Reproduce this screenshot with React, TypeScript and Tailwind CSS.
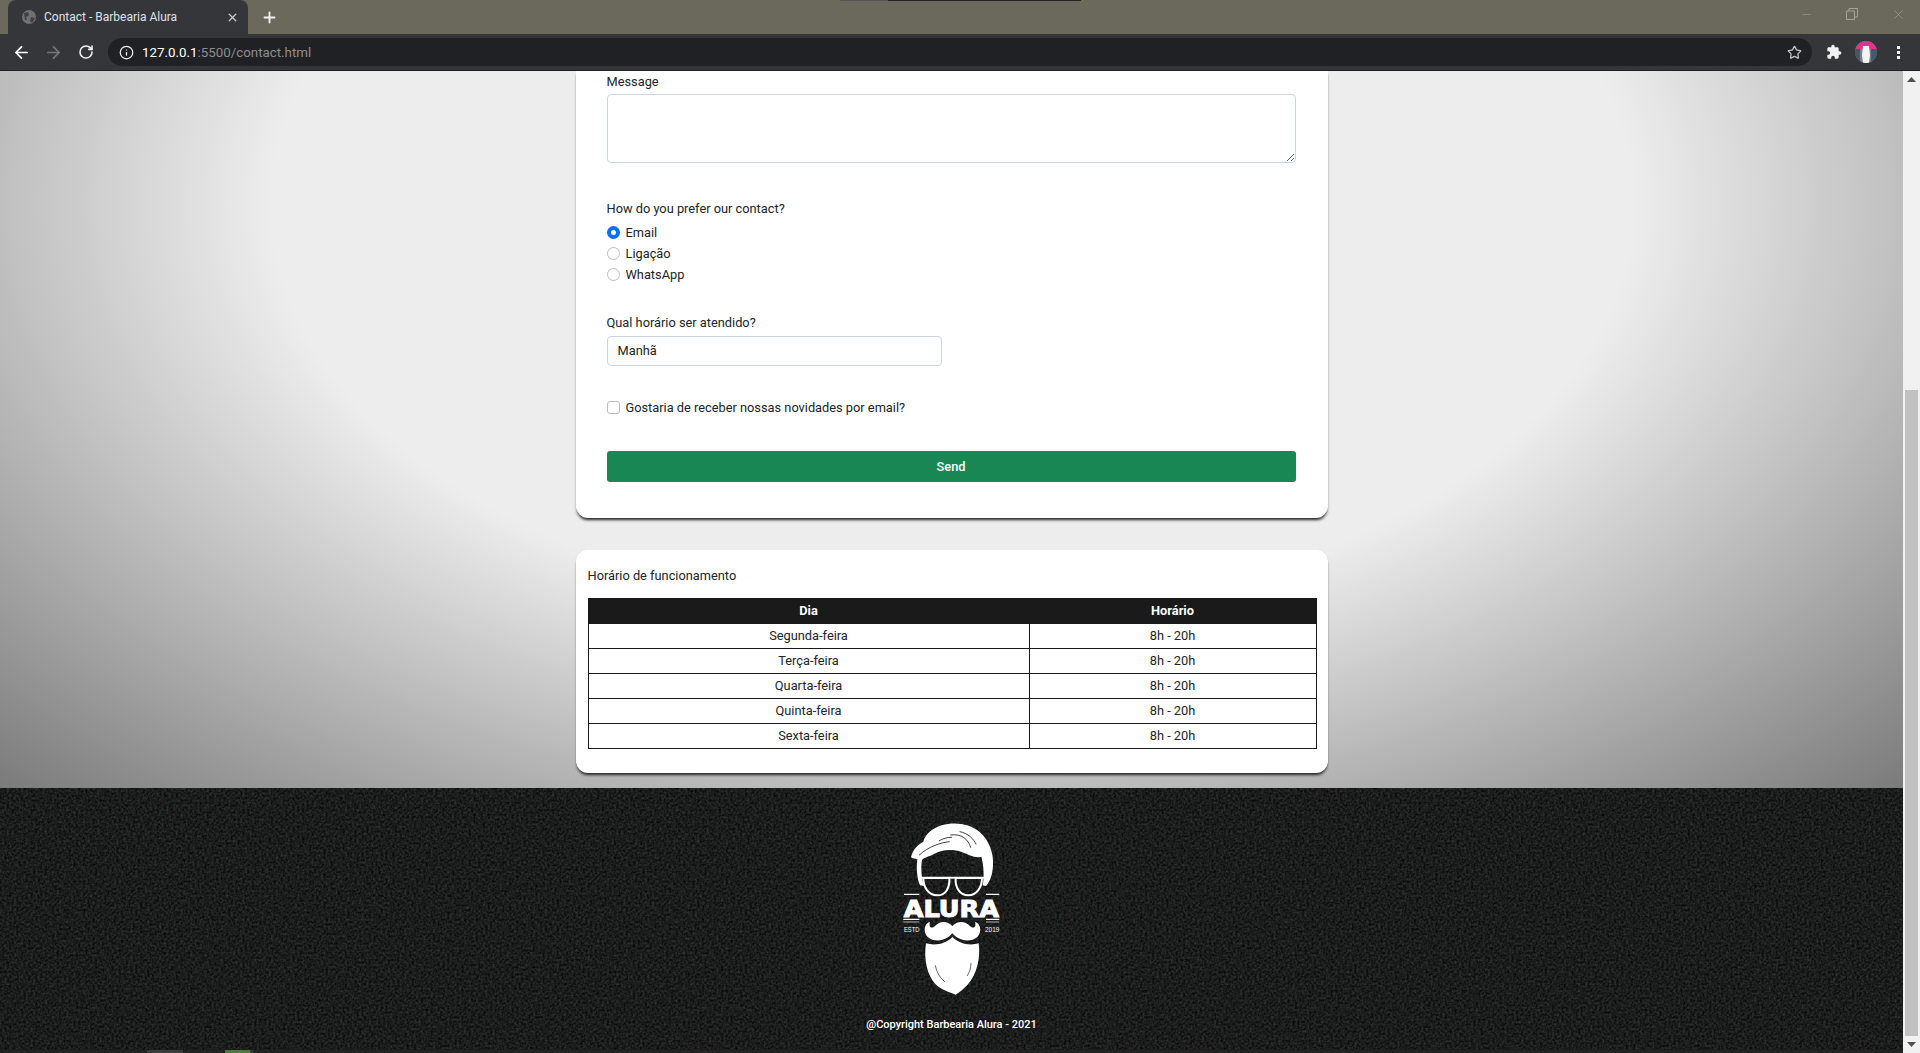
import React from "react";
import { ArrowLeft, ArrowRight, RotateCw, Info, Star, Plus, X, Minus } from "lucide-react";

const rows = ["Segunda-feira", "Terça-feira", "Quarta-feira", "Quinta-feira", "Sexta-feira"];

function Logo() {
  return (
    <svg viewBox="120 60 310 530" width="103.33" height="176.67" className="block">
      <path fill="#fff" d="M153 172 C158 150 172 135 190 125 C195 105 215 85 245 76 C285 64 330 72 358 95 C385 118 402 155 399 198 C397 225 390 245 378 258 L368 256 C373 235 372 200 364 170 C345 176 330 165 305 156 C275 146 245 150 222 162 C207 170 193 172 186 180 C182 200 184 235 192 258 L180 256 C172 238 168 205 172 178 C165 176 158 175 153 172 Z" />
      <path fill="none" stroke="#1b1b1b" strokeWidth="2.5" strokeLinecap="round" d="M178 165 C205 140 240 128 268 125 M272 105 C305 100 325 118 332 142 M300 95 C325 100 342 118 348 132 M238 122 C250 115 262 112 275 112" />
      <path fill="none" stroke="#fff" strokeWidth="6" strokeLinejoin="round" d="M190 234 H268 C270 262 258 286 232 286 C205 286 190 262 190 234 Z M287 234 H366 C366 262 350 286 325 286 C299 286 285 262 287 234 Z" />
      <path stroke="#fff" strokeWidth="6" d="M182 233 H374" />
      <path stroke="#fff" strokeWidth="4" d="M132 283 H178 M378 283 H418 M130 358 H178 M378 358 H418" />
      <path stroke="#fff" strokeWidth="2" d="M130 366 H178 M378 366 H418" />
      <text x="131" y="351" fill="#fff" stroke="#fff" strokeWidth="3" fontFamily="'DejaVu Sans', sans-serif" fontWeight="700" fontSize="68" textLength="286" lengthAdjust="spacingAndGlyphs">ALURA</text>
      <text x="132" y="397" fill="#fff" fontFamily="'Liberation Sans', sans-serif" fontSize="22" textLength="46" lengthAdjust="spacingAndGlyphs">ESTD</text>
      <text x="375" y="397" fill="#fff" fontFamily="'Liberation Sans', sans-serif" fontSize="22" textLength="43" lengthAdjust="spacingAndGlyphs">2019</text>
      <path fill="#fff" d="M277 378 C262 362 240 362 225 378 C215 388 205 382 210 365 C193 370 188 395 203 411 C225 430 260 422 277 400 C295 422 330 430 352 411 C367 395 362 370 345 365 C350 382 340 388 330 378 C315 362 292 362 277 378 Z" />
      <path fill="#fff" d="M198 430 C225 438 257 432 277 411 C298 432 330 438 356 430 C362 470 352 525 322 555 C308 570 296 578 287 584 C270 576 245 572 226 552 C203 528 190 480 198 430 Z" />
      <path fill="none" stroke="#1b1b1b" strokeWidth="2" strokeLinecap="round" d="M226 497 C230 518 240 534 254 545 M333 490 C333 505 328 518 322 527" />
    </svg>
  );
}

function FooterNoise() {
  return (
    <svg className="absolute inset-0 w-full h-full" aria-hidden="true">
      <filter id="fn" x="0" y="0" width="100%" height="100%" colorInterpolationFilters="sRGB">
        <feTurbulence type="fractalNoise" baseFrequency="0.42" numOctaves="2" seed="4" />
        <feColorMatrix type="matrix" values="0.24 0 0 0 -0.012  0.24 0 0 0 -0.01  0.24 0 0 0 -0.01  0 0 0 0 1" />
      </filter>
      <rect width="100%" height="100%" filter="url(#fn)" />
    </svg>
  );
}

export default function App() {
  return (
    <div className="relative w-[1920px] h-[1053px] overflow-hidden flex flex-col font-['Roboto',sans-serif] text-[12.8px] leading-[21px] text-[#212529]">
      {/* tab strip */}
      <div className="h-[34px] shrink-0 bg-[#6b685c] flex items-end pl-2 relative">
        <div className="absolute left-[840px] top-0 h-px w-[48px] bg-[#555]" />
        <div className="absolute left-[888px] top-0 h-px w-[193px] bg-[#222]" />
        <div className="w-[240px] h-[34px] bg-[#35363a] rounded-t-[8px] flex items-center pl-[13px] pr-[9px] text-[12px] text-[#dee1e6]">
          <svg width="16" height="16" viewBox="0 0 16 16" className="shrink-0"><circle cx="8" cy="8" r="7" fill="#6e7074" /><path fill="#3f4044" d="M3 4 L7 3 L8 6 L5 8 L6 11 L4 11 Z M10 8 L14 9 L11 14 L9 12 Z" /></svg>
          <span className="ml-[7px] flex-1 whitespace-nowrap">Contact - Barbearia Alura</span>
          <X size={13} strokeWidth={2.4} className="text-[#c8c9cb]" />
        </div>
        <Plus size={17} strokeWidth={2.6} className="text-[#f1f1f1] ml-[13px] mb-[8px]" />
        <div className="ml-auto flex items-center h-full text-[#a5a297] pr-[14px] pb-[6px]">
          <Minus size={13} strokeWidth={1} className="mr-[33px]" />
          <svg width="12" height="12" viewBox="0 0 12 12" fill="none" stroke="currentColor" className="mr-[33px]"><path d="M.5 3 H8.5 V11.5 H.5 Z M3 3 V.5 H11.5 V9 H8.5" /></svg>
          <X size={15} strokeWidth={1} />
        </div>
      </div>
      {/* toolbar */}
      <div className="h-[37px] shrink-0 bg-[#35363a] border-b border-[#202124] flex items-center pl-[12px]">
        <ArrowLeft size={19} strokeWidth={2.2} className="text-white" />
        <ArrowRight size={19} strokeWidth={2.2} className="text-[#77787b] ml-[13px]" />
        <RotateCw size={16} strokeWidth={2.4} className="text-[#f1f1f1] ml-[15px]" />
        <div className="ml-[14px] w-[1704px] h-[28px] rounded-[14px] bg-[#202124] flex items-center pl-[11px] pr-[10px]">
          <Info size={15} strokeWidth={2} className="text-[#f1f1f1]" />
          <span className="ml-[8px] text-[13.33px] text-white">127.0.0.1<span className="text-[#8d8e90]">:5500/contact.html</span></span>
          <Star size={15} strokeWidth={2} className="ml-auto text-[#c4c5c6]" />
        </div>
        <svg viewBox="0 0 24 24" width="16" height="16" fill="#f1f1f1" className="ml-[14px]"><path d="M20.5 11H19V7c0-1.1-.9-2-2-2h-4V3.5C13 2.12 11.88 1 10.5 1S8 2.12 8 3.5V5H4c-1.1 0-1.99.9-1.99 2v3.8H3.5c1.49 0 2.7 1.21 2.7 2.7s-1.21 2.7-2.7 2.7H2V20c0 1.1.9 2 2 2h3.8v-1.5c0-1.49 1.21-2.7 2.7-2.7 1.49 0 2.7 1.21 2.7 2.7V22H17c1.1 0 2-.9 2-2v-4h1.5c1.38 0 2.5-1.12 2.5-2.5S21.88 11 20.5 11z" /></svg>
        <svg viewBox="0 0 22 22" width="22" height="22" className="ml-[13px]">
          <clipPath id="av"><circle cx="11" cy="11" r="11" /></clipPath>
          <g clipPath="url(#av)">
            <rect width="22" height="22" fill="#77808c" />
            <rect width="22" height="8" fill="#e0358c" />
            <rect x="0" y="8" width="5" height="14" fill="#4c5560" />
            <rect x="16" y="8" width="6" height="14" fill="#46586c" />
            <path fill="#f4f4f4" d="M8 5 H14 L15 14 L14 22 H8 L7 14 Z" />
          </g>
        </svg>
        <div className="ml-[20px] flex flex-col gap-[2px]">
          <span className="w-[3px] h-[3px] bg-white" /><span className="w-[3px] h-[3px] bg-white" /><span className="w-[3px] h-[3px] bg-white" />
        </div>
      </div>
      {/* page + scrollbar */}
      <div className="flex flex-1 min-h-0">
        <div className="w-[1903px] flex flex-col">
          <main className="h-[717px] shrink-0 flex flex-col items-center bg-[radial-gradient(ellipse_1360px_822px_at_952px_133px,#ededed_50%,#7a7a7a_100%)]">
            <form className="w-[752px] h-[447px] shrink-0 bg-white rounded-b-[12px] shadow-[0_3px_3px_-1px_#222] px-[31px]">
              <div>Message</div>
              <textarea className="block w-[689px] h-[69px] mt-[2px] border border-[#ced4da] rounded-[4px] bg-white" />
              <div className="mt-[35px]">How do you prefer our contact?</div>
              <div className="mt-[3px] flex flex-col">
                <label className="flex items-center h-[21px]"><input type="radio" name="c" readOnly className="appearance-none w-[13px] h-[13px] rounded-full border-[4px] border-[#0d6efd] bg-white mr-[6px]" />Email</label>
                <label className="flex items-center h-[21px]"><input type="radio" name="c2" readOnly className="appearance-none w-[13px] h-[13px] rounded-full border border-[#bdbdbd] bg-white mr-[6px]" />Ligação</label>
                <label className="flex items-center h-[21px]"><input type="radio" name="c3" readOnly className="appearance-none w-[13px] h-[13px] rounded-full border border-[#bdbdbd] bg-white mr-[6px]" />WhatsApp</label>
              </div>
              <div className="mt-[27px]">Qual horário ser atendido?</div>
              <select className="block appearance-none w-[335px] h-[30px] mt-[3px] pl-[10px] pb-[2px] border border-[#ced4da] rounded-[4px] bg-white">
                <option>Manhã</option>
              </select>
              <label className="flex items-center h-[21px] mt-[31px]"><input type="checkbox" readOnly className="appearance-none w-[13px] h-[13px] rounded-[3px] border border-[#bdbdbd] bg-white mr-[6px]" />Gostaria de receber nossas novidades por email?</label>
              <button type="button" className="block w-[689px] h-[31px] mt-[33px] rounded-[3px] bg-[#198754] text-white font-medium">Send</button>
            </form>
            <section className="w-[752px] mt-8 h-[223px] shrink-0 bg-white rounded-[12px] shadow-[0_3px_3px_-1px_#222] px-3 pt-[15px]">
              <div>Horário de funcionamento</div>
              <table className="mt-[12px] w-[728px] table-fixed border-collapse text-center">
                <colgroup><col className="w-[441px]" /><col className="w-[287px]" /></colgroup>
                <thead>
                  <tr className="h-[25px] bg-[#1a1a1a] text-white font-bold">
                    <th className="border border-[#1a1a1a] p-0 pb-[2px]">Dia</th>
                    <th className="border border-[#1a1a1a] p-0 pb-[2px]">Horário</th>
                  </tr>
                </thead>
                <tbody>
                  {rows.map((d) => (
                    <tr key={d} className="h-[25px]">
                      <td className="border border-[#1a1a1a] p-0 pb-[2px]">{d}</td>
                      <td className="border border-[#1a1a1a] p-0 pb-[2px]">8h - 20h</td>
                    </tr>
                  ))}
                </tbody>
              </table>
            </section>
          </main>
          <footer className="relative h-[265px] shrink-0 bg-[#1c1c1c] flex flex-col">
            <FooterNoise />
            <div className="relative flex-1 flex flex-col items-center pt-[32px]">
              <Logo />
              <p className="mt-[19px] text-[11px] font-medium text-white leading-[18px]">@Copyright Barbearia Alura - 2021</p>
            </div>
            <div className="relative h-[3px] bg-[#222] flex">
              <span className="ml-[147px] w-[36px] bg-[#3a3a3a]" />
              <span className="ml-[42px] w-[25px] bg-[#4a7a3a]" />
              <span className="w-[3px] bg-[#3a3a3a]" />
            </div>
          </footer>
        </div>
        <div className="w-[17px] bg-[#f1f1f1] flex flex-col items-center">
          <div className="h-[17px] flex items-center justify-center shrink-0">
            <svg width="9" height="5" viewBox="0 0 9 5"><path d="M4.5 0 L9 5 H0 Z" fill="#505050" /></svg>
          </div>
          <div className="mt-[302px] w-[13px] h-[646px] bg-[#c1c1c1] shrink-0" />
          <div className="mt-auto h-[17px] flex items-center justify-center shrink-0">
            <svg width="9" height="5" viewBox="0 0 9 5"><path d="M0 0 H9 L4.5 5 Z" fill="#505050" /></svg>
          </div>
        </div>
      </div>
    </div>
  );
}
